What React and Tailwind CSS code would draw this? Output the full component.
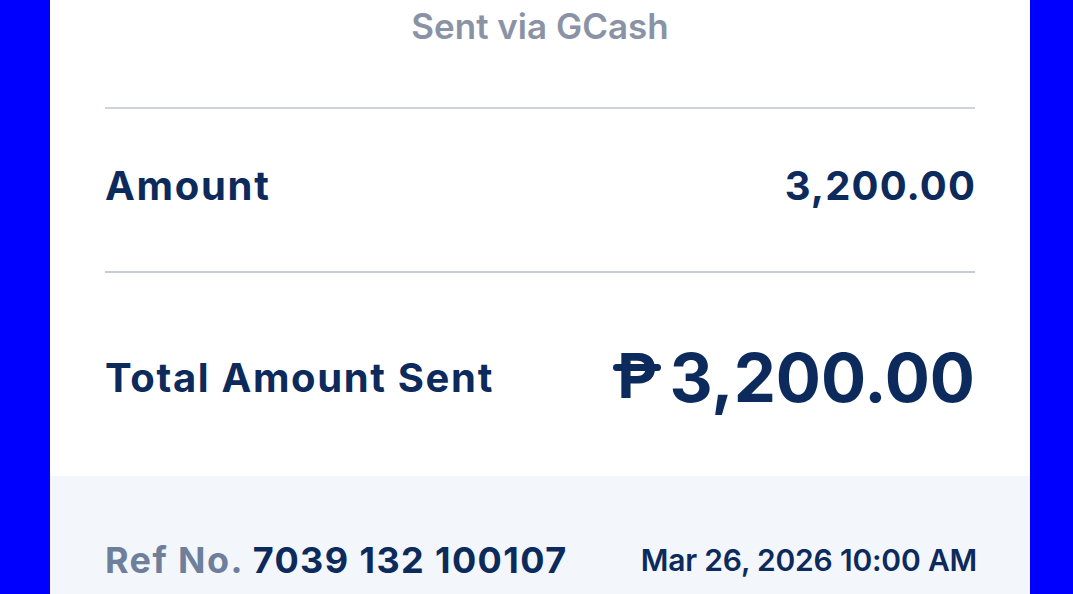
export default function App() {
  const font = { fontFamily: 'Inter, "DejaVu Sans", sans-serif' };
  return (
    <div className="w-full h-[594px] bg-[#0000ff] flex pl-[50px] overflow-hidden" style={font}>
      <div className="w-[980px] h-full bg-white flex flex-col">
        <div className="h-[107px] flex justify-center pt-[4px]">
          <div className="text-[35px] leading-[44px] font-semibold text-[#8a93a5]">Sent via GCash</div>
        </div>
        <div className="px-[55px]">
          <div className="h-[2px] bg-[#cfd4dc]" />
          <div className="h-[162px] flex items-center justify-between text-[#0c2a5c] pb-[8px]">
            <div className="text-[40px] font-bold tracking-[1.7px]">Amount</div>
            <div className="text-[40px] font-bold tracking-[1.1px] -mr-[1px]">3,200.00</div>
          </div>
          <div className="h-[2px] bg-[#c5ccd8]" />
          <div className="h-[203px] flex items-center justify-between text-[#0c2a5c] pt-[6px]">
            <div className="text-[40px] font-bold tracking-[1.65px]">Total Amount Sent</div>
            <div className="flex items-center gap-[8px]">
              <span className="relative text-[62px] font-bold leading-none px-[4px] -mt-[3px]">
                P
                <span className="absolute left-0 right-0 top-[19px] h-[7px] rounded-full bg-[#0c2a5c]" />
              </span>
              <span className="text-[67px] font-bold leading-none">3,200.00</span>
            </div>
          </div>
        </div>
        <div className="flex-1 bg-[#f3f6fb] px-[55px] pt-[60px]">
          <div className="flex items-center justify-between">
            <div className="text-[36px] font-bold leading-[48px] tracking-[1.4px]">
              <span className="text-[#6e7f9c]">Ref No.</span>{' '}
              <span className="text-[#0c2a5c]">7039 132 100107</span>
            </div>
            <div className="text-[30px] font-semibold text-[#0c2a5c] tracking-[-0.2px] -mr-[2px]">Mar 26, 2026 10:00 AM</div>
          </div>
        </div>
      </div>
    </div>
  );
}
